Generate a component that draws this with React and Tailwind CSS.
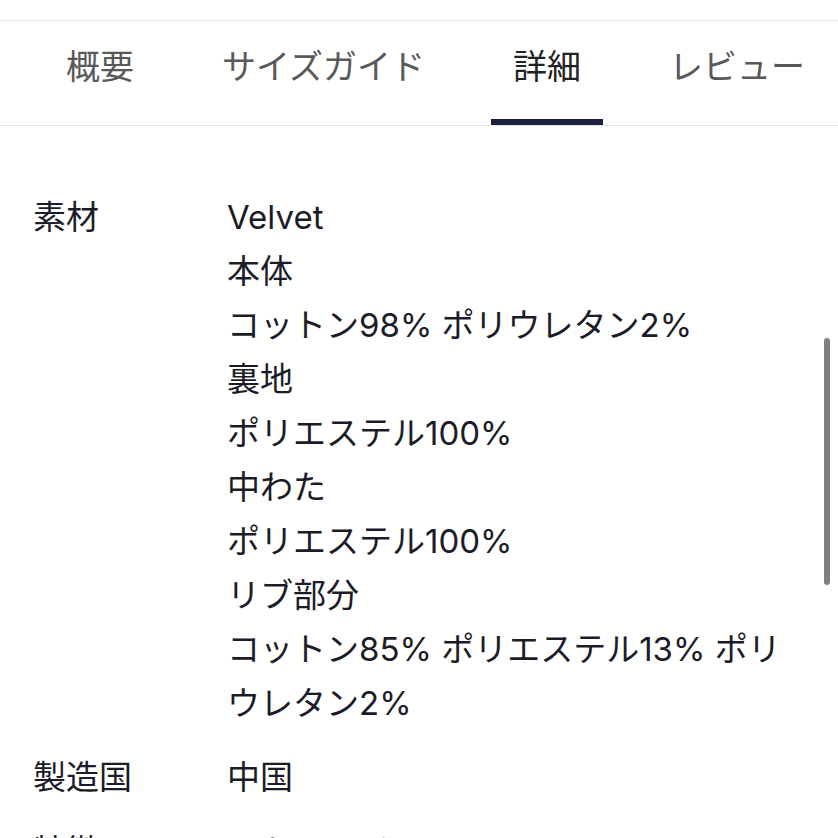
import React, { useState } from 'react';

const tabs = ['概要', 'サイズガイド', '詳細', 'レビュー'];

const details = [
    {
        label: '素材',
        lines: [
            'Velvet',
            '本体',
            'コットン98% ポリウレタン2%',
            '裏地',
            'ポリエステル100%',
            '中わた',
            'ポリエステル100%',
            'リブ部分',
            'コットン85% ポリエステル13% ポリウレタン2%',
        ],
    },
    { label: '製造国', lines: ['中国'] },
    { label: '特徴', lines: ['ストレッチ'] },
];

export default function App() {
    const [active, setActive] = useState(2);

    return (
        <div
            className="relative w-[838px] h-[838px] overflow-hidden bg-white text-[#1c1c28]"
            style={{ fontFamily: 'Inter, "Noto Sans CJK JP", "Noto Sans", sans-serif' }}
        >
            <div className="h-[20px]" />

            {/* tab bar */}
            <div className="flex h-[106px] border-y border-[#e3e3e3] pl-[44px] gap-[44px]">
                {tabs.map((t, i) => (
                    <button
                        key={t}
                        onClick={() => setActive(i)}
                        className={`relative h-full px-[22px] text-[34px] leading-none whitespace-nowrap ${i === active ? 'text-[#222222]' : 'text-[#595959]'}`}
                    >
                        <span className="relative -top-[6px]">{t}</span>
                        {i === active && (
                            <span className="absolute left-0 right-0 bottom-0 h-[6px] bg-[#1d1f3f]" />
                        )}
                    </button>
                ))}
            </div>

            {/* details */}
            <div className="pt-[64px] pl-[33px] pr-[40px] flex flex-col gap-[20px]">
                {details.map((row) => (
                    <div key={row.label} className="flex text-[33px] leading-[54px]">
                        <div className="w-[194px] shrink-0">{row.label}</div>
                        <div className="flex-1 min-w-0">
                            {row.lines.map((l, idx) => (
                                <div key={idx}>{l}</div>
                            ))}
                        </div>
                    </div>
                ))}
            </div>

            {/* overlay scrollbar */}
            <div className="absolute right-[8px] top-[338px] w-[6px] h-[247px] rounded-full bg-[#808080]" />
        </div>
    );
}
